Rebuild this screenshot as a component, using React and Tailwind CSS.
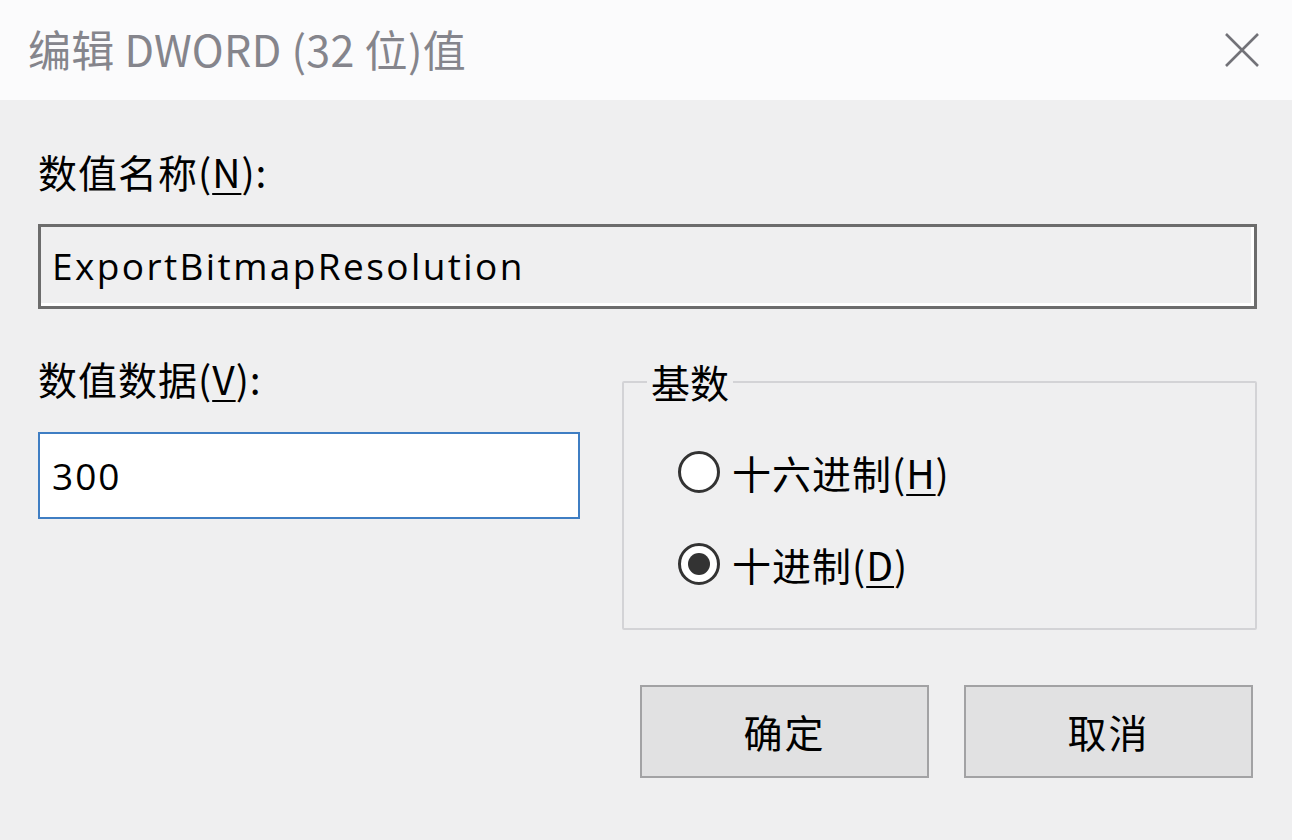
import React from "react"

const cjk = { fontFamily: '"Noto Sans CJK SC", "Noto Sans", sans-serif' }
const latin = { fontFamily: '"Open Sans", "Noto Sans CJK SC", sans-serif' }

function Key({ children }) {
    return <span className="underline decoration-2 underline-offset-[5px]">{children}</span>
}

function Radio({ checked, label, accel }) {
    return (
        <div className="flex items-center gap-[12px]">
            <span className="w-[42px] h-[42px] rounded-full border-[3px] border-[#333] bg-white flex items-center justify-center">
                {checked ? <span className="w-[22px] h-[22px] rounded-full bg-[#333]"></span> : ""}
            </span>
            <span className="text-[39px] leading-none tracking-[1px] text-black" style={cjk}>
                {label}(<Key>{accel}</Key>)
            </span>
        </div>
    )
}

function App() {
    return (
        <div className="w-[1292px] h-[840px] bg-[#efeff0] flex flex-col overflow-hidden">
            <header className="h-[100px] bg-[#fbfbfc] flex items-center justify-between pl-[28px] pr-[32px]">
                <h1 className="text-[43px] leading-none tracking-[0.3px] text-[#85858c] pb-[4px]" style={cjk}>编辑 DWORD (32 位)值</h1>
                <svg viewBox="0 0 36 36" className="w-[36px] h-[36px]">
                    <path d="M2 2L34 34M34 2L2 34" stroke="#727278" strokeWidth="2.6" fill="none" />
                </svg>
            </header>

            <section className="flex flex-col px-[38px] pr-[35px]">
                <label className="mt-[52px] text-[39px] leading-none tracking-[1px] text-black" style={cjk}>
                    数值名称(<Key>N</Key>):
                </label>
                <div className="mt-[33px] h-[85px] border-[3px] border-[#6c6c6c] flex">
                    <div className="flex-1 border-r-[3px] border-b-[3px] border-white flex items-center pl-[11px]">
                        <span className="text-[37px] leading-none text-black tracking-[2.4px]" style={latin}>ExportBitmapResolution</span>
                    </div>
                </div>

                <div className="flex mt-[50px]">
                    <div className="w-[542px] flex flex-col">
                        <label className="text-[39px] leading-none tracking-[1px] text-black" style={cjk}>
                            数值数据(<Key>V</Key>):
                        </label>
                        <div className="mt-[34px] h-[87px] border-[2.5px] border-[#3f7ec3] bg-white flex items-center pl-[12px]">
                            <span className="text-[37px] leading-none tracking-[2px] text-black" style={latin}>300</span>
                        </div>
                    </div>

                    <fieldset className="ml-[42px] flex-1 h-[268px] border-2 border-[#d3d3d6] rounded-[2px] pl-[54px] mt-[3px]">
                        <legend className="ml-[-31px] px-[4px] text-[39px] leading-none text-black" style={cjk}>基数</legend>
                        <div className="flex flex-col gap-[50px] mt-[50px]">
                            <Radio label="十六进制" accel="H" />
                            <Radio checked label="十进制" accel="D" />
                        </div>
                    </fieldset>
                </div>

                <div className="flex justify-end gap-[35px] mt-[55px] pr-[4px]">
                    <button className="w-[289px] h-[93px] bg-[#e1e1e2] border-[2.5px] border-[#a2a2a4] text-[39px] tracking-[2px] text-black" style={cjk}>确定</button>
                    <button className="w-[289px] h-[93px] bg-[#e1e1e2] border-[2.5px] border-[#a2a2a4] text-[39px] tracking-[2px] text-black" style={cjk}>取消</button>
                </div>
            </section>
        </div>
    )
}

export default App
